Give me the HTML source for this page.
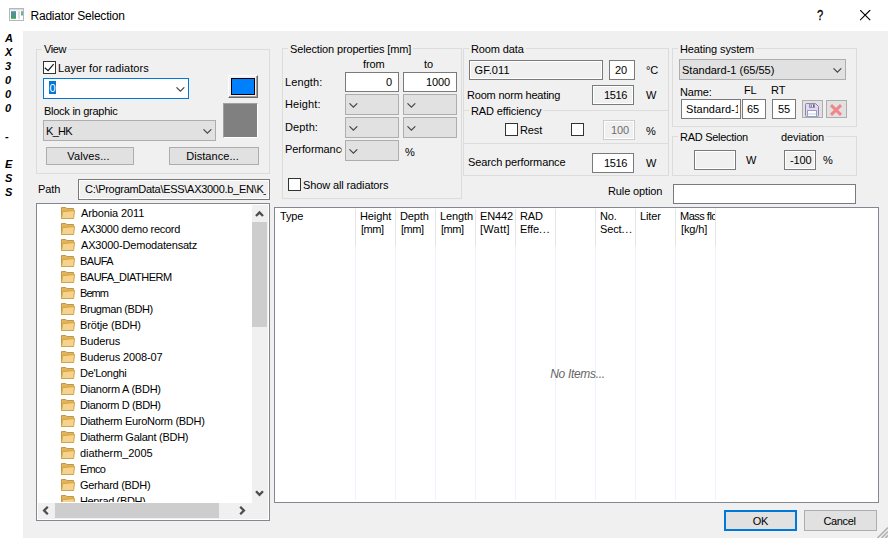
<!DOCTYPE html>
<html>
<head>
<meta charset="utf-8">
<title>Radiator Selection</title>
<style>
*{box-sizing:border-box;margin:0;padding:0}
html,body{width:889px;height:539px;overflow:hidden;background:#fff}
body{position:relative;font-family:"Liberation Sans",sans-serif;font-size:11px;color:#000;letter-spacing:-0.12px;line-height:13px}
.a{position:absolute;white-space:nowrap}
.panel{left:23px;top:31px;width:865px;height:507px;background:#f0f0f0}
.gb{border:1px solid #dcdcdc}
.gl{background:#f0f0f0;padding:0 2px;height:13px}
.in{border:1px solid #7a7a7a;background:#fff;overflow:hidden;padding:3px 3px 0 3px}
.ro{background:#f0f0f0;box-shadow:inset 0 0 0 1px #fff}
.dis{border-color:#cccccc;color:#6d6d6d;background:#f0f0f0;box-shadow:inset 0 0 0 1px #fff}
.r{text-align:right}
.cb{border:1px solid #adadad;background:#e1e1e1;overflow:hidden;padding:3px 3px 0 3px}
.btn{border:1px solid #adadad;background:#e1e1e1;text-align:center;padding-top:3px}
.chk{width:13px;height:13px;border:1px solid #333;background:#fff}
.chev{width:9px;height:5px}
.side{left:0;top:31px;width:23px;font-weight:bold;font-style:italic;font-size:11px;line-height:14px;letter-spacing:0}
.side div{height:14px;padding-left:5px}
.title{left:30.5px;top:8px;font-size:12px;line-height:16px;letter-spacing:-0.22px}
.tree{left:36px;top:203px;width:234px;height:318px;border:1px solid #828790;background:#fff;overflow:hidden}
.ti{position:absolute;left:0;height:16px;width:215px}
.ti svg{position:absolute;left:24px;top:2px}
.ti span{position:absolute;left:44px;top:2px;line-height:13px}
.list{left:274px;top:207px;width:605px;height:296px;border:1px solid #828790;background:#fff;overflow:hidden}
.hc{position:absolute;top:0;height:292px;border-right:1px solid #ebf2fb;overflow:hidden;padding:2px 0 0 4px;line-height:13.4px}
</style>
</head>
<body>
<!-- title bar -->
<svg class="a" style="left:9px;top:8px" width="15" height="13" viewBox="0 0 15 13">
  <defs><linearGradient id="ig" x1="0" y1="0" x2="0" y2="1"><stop offset="0" stop-color="#5d88b4"/><stop offset="1" stop-color="#3ea458"/></linearGradient></defs>
  <rect x="0.5" y="0.5" width="14" height="12" fill="#fdfdfd" stroke="#b4b8bc"/>
  <rect x="1" y="1" width="13" height="1.3" fill="#d9dcdf"/>
  <rect x="2" y="3.2" width="5" height="7.6" fill="url(#ig)"/>
  <rect x="9" y="3.2" width="2" height="7.6" fill="#dedede"/>
  <rect x="12" y="3.2" width="2" height="4.3" fill="url(#ig)" opacity="0.8"/>
</svg>
<div class="a title">Radiator Selection</div>
<div class="a" style="left:817px;top:7px;font-size:14px;line-height:16px;letter-spacing:0;-webkit-text-stroke:0.3px #000;transform:scaleX(0.8);transform-origin:0 0">?</div>
<svg class="a" style="left:860px;top:10px" width="11" height="11" viewBox="0 0 11 11"><path d="M0 0 L10.2 10.2 M10.2 0 L0 10.2" stroke="#000" stroke-width="1.15" fill="none"/></svg>

<!-- side strip -->
<div class="a side"><div>A</div><div>X</div><div>3</div><div>0</div><div>0</div><div>0</div><div>&nbsp;</div><div>-</div><div>&nbsp;</div><div>E</div><div>S</div><div>S</div></div>

<div class="a panel"></div>

<!-- View group -->
<div class="a gb" style="left:36px;top:49px;width:234px;height:125px"></div>
<div class="a gl" style="left:42px;top:43px;letter-spacing:-0.4px">View</div>
<div class="a chk" style="left:43px;top:61px"></div>
<svg class="a" style="left:44px;top:62px" width="11" height="11" viewBox="0 0 11 11"><path d="M0.8 5.8 L4.1 8.6 L9.6 2.2" stroke="#111" stroke-width="1.15" fill="none"/></svg>
<div class="a" style="left:58px;top:62px;letter-spacing:0.08px">Layer for radiators</div>
<div class="a in" style="left:43px;top:78px;width:146px;height:21px;border-color:#0078d7"><span style="background:#0078d7;color:#fff;display:inline-block;height:13px;width:7px;margin-left:2px;position:relative;top:-1px;line-height:14px;text-align:center">0</span></div>
<svg class="a chev" style="left:176px;top:87px" viewBox="0 0 9 5"><path d="M0.5 0.3 L4.4 4.2 L8.3 0.3" stroke="#444" stroke-width="1.1" fill="none"/></svg>
<!-- colour button -->
<div class="a" style="left:228px;top:75px;width:30px;height:23px;background:#f0f0f0;border-top:1px solid #fff;border-left:1px solid #fff;border-right:1px solid #696969;border-bottom:1px solid #696969"></div>
<div class="a" style="left:229px;top:76px;width:28px;height:21px;border-right:1px solid #a0a0a0;border-bottom:1px solid #a0a0a0"></div>
<div class="a" style="left:231px;top:78px;width:24px;height:17px;background:#0080ff;border:1px solid #000"></div>
<!-- grey block -->
<div class="a" style="left:223px;top:103px;width:35px;height:35px;background:#808080;border-top:1px solid #a0a0a0;border-left:1px solid #a0a0a0;border-right:1px solid #fff;border-bottom:1px solid #fff"></div>
<div class="a" style="left:44px;top:105px;letter-spacing:-0.26px">Block in graphic</div>
<div class="a cb" style="left:43px;top:120px;width:173px;height:21px;padding-top:4px;padding-left:2px;letter-spacing:-0.7px">K_HK</div>
<svg class="a chev" style="left:203px;top:129px" viewBox="0 0 9 5"><path d="M0.5 0.3 L4.4 4.2 L8.3 0.3" stroke="#444" stroke-width="1.1" fill="none"/></svg>
<div class="a btn" style="left:46px;top:147px;width:88px;height:18px;padding-top:2px;letter-spacing:0.1px;padding-right:3px">Valves...</div>
<div class="a btn" style="left:169px;top:147px;width:90px;height:18px;padding-top:2px;letter-spacing:0.07px;padding-right:3px">Distance...</div>

<!-- Path -->
<div class="a" style="left:38px;top:183px">Path</div>
<div class="a in ro" style="left:78px;top:179px;width:192px;height:21px;padding-left:6px"><div style="width:181px;overflow:hidden;letter-spacing:-0.29px">C:\ProgramData\ESS\AX3000.b_EN\K_</div></div>

<!-- Selection properties -->
<div class="a gb" style="left:282px;top:48px;width:180px;height:151px"></div>
<div class="a gl" style="left:288px;top:43px;letter-spacing:-0.14px">Selection properties [mm]</div>
<div class="a" style="left:363px;top:58px">from</div>
<div class="a" style="left:424px;top:58px">to</div>
<div class="a" style="left:285px;top:76px;letter-spacing:0.1px">Length:</div>
<div class="a in r" style="left:345px;top:72px;width:54px;height:20px;padding-right:6px">0</div>
<div class="a in r" style="left:403px;top:72px;width:54px;height:20px;padding-right:6px">1000</div>
<div class="a" style="left:285px;top:98px;letter-spacing:0.1px">Height:</div>
<div class="a cb" style="left:345px;top:94px;width:54px;height:21px"></div>
<div class="a cb" style="left:403px;top:94px;width:54px;height:21px"></div>
<svg class="a chev" style="left:349px;top:103px" viewBox="0 0 9 5"><path d="M0.5 0.3 L4.4 4.2 L8.3 0.3" stroke="#444" stroke-width="1.1" fill="none"/></svg>
<svg class="a chev" style="left:407px;top:103px" viewBox="0 0 9 5"><path d="M0.5 0.3 L4.4 4.2 L8.3 0.3" stroke="#444" stroke-width="1.1" fill="none"/></svg>
<div class="a" style="left:285px;top:121px;letter-spacing:0.1px">Depth:</div>
<div class="a cb" style="left:345px;top:117px;width:54px;height:21px"></div>
<div class="a cb" style="left:403px;top:117px;width:54px;height:21px"></div>
<svg class="a chev" style="left:349px;top:126px" viewBox="0 0 9 5"><path d="M0.5 0.3 L4.4 4.2 L8.3 0.3" stroke="#444" stroke-width="1.1" fill="none"/></svg>
<svg class="a chev" style="left:407px;top:126px" viewBox="0 0 9 5"><path d="M0.5 0.3 L4.4 4.2 L8.3 0.3" stroke="#444" stroke-width="1.1" fill="none"/></svg>
<div class="a" style="left:285px;top:143px;width:57px;overflow:hidden;letter-spacing:-0.08px">Performance:</div>
<div class="a cb" style="left:345px;top:140px;width:54px;height:21px"></div>
<svg class="a chev" style="left:349px;top:149px" viewBox="0 0 9 5"><path d="M0.5 0.3 L4.4 4.2 L8.3 0.3" stroke="#444" stroke-width="1.1" fill="none"/></svg>
<div class="a" style="left:405px;top:146px">%</div>
<div class="a chk" style="left:288px;top:178px"></div>
<div class="a" style="left:303px;top:179px">Show all radiators</div>

<!-- Room data -->
<div class="a gb" style="left:463px;top:48px;width:206px;height:128px"></div>
<div class="a gb" style="left:463px;top:110px;width:206px;height:34px"></div>
<div class="a gl" style="left:469px;top:43px">Room data</div>
<div class="a in ro" style="left:469px;top:60px;width:134px;height:20px;padding-left:4.5px;letter-spacing:0.08px">GF.011</div>
<div class="a in r" style="left:609px;top:60px;width:26px;height:20px;padding-right:7px">20</div>
<div class="a" style="left:646px;top:64px">°C</div>
<div class="a" style="left:467px;top:89px;letter-spacing:-0.2px">Room norm heating</div>
<div class="a in ro r" style="left:592px;top:85px;width:42px;height:20px;padding-right:6px;letter-spacing:-0.35px">1516</div>
<div class="a" style="left:646px;top:89px">W</div>
<div class="a gl" style="left:469px;top:105px">RAD efficiency</div>
<div class="a chk" style="left:505px;top:123px"></div>
<div class="a" style="left:520px;top:124px">Rest</div>
<div class="a chk" style="left:571px;top:123px"></div>
<div class="a in dis r" style="left:603px;top:120px;width:32px;height:20px;padding-right:5px">100</div>
<div class="a" style="left:646px;top:125px">%</div>
<div class="a" style="left:468px;top:156px">Search performance</div>
<div class="a in r" style="left:592px;top:153px;width:42px;height:20px;padding-right:6px;letter-spacing:-0.35px">1516</div>
<div class="a" style="left:646px;top:157px">W</div>
<div class="a" style="left:608px;top:185px">Rule option</div>

<!-- Heating system -->
<div class="a gb" style="left:672px;top:48px;width:185px;height:79px"></div>
<div class="a gl" style="left:678px;top:43px">Heating system</div>
<div class="a cb" style="left:679px;top:59px;width:167px;height:21px;padding-left:2px;padding-top:4px;letter-spacing:0">Standard-1 (65/55)</div>
<svg class="a chev" style="left:833px;top:68px" viewBox="0 0 9 5"><path d="M0.5 0.3 L4.4 4.2 L8.3 0.3" stroke="#444" stroke-width="1.1" fill="none"/></svg>
<div class="a" style="left:680px;top:86px">Name:</div>
<div class="a" style="left:744px;top:84px">FL</div>
<div class="a" style="left:771px;top:84px">RT</div>
<div class="a in" style="left:681px;top:99px;width:60px;height:20px;padding-left:4px"><div style="width:52px;overflow:hidden;letter-spacing:0.05px">Standard-1</div></div>
<div class="a in" style="left:742px;top:99px;width:24px;height:20px;padding-left:4px">65</div>
<div class="a in" style="left:772px;top:99px;width:24px;height:20px;padding-left:5px">55</div>
<div class="a" style="left:802px;top:100px;width:21px;height:18px;border:1px solid #adadad;background:#e1e1e1"></div>
<svg class="a" style="left:805px;top:103px" width="14" height="14" viewBox="0 0 14 14"><path d="M1.5 0.5 H10.5 L13.5 3.5 V12.5 Q13.5 13.5 12.5 13.5 H1.5 Q0.5 13.5 0.5 12.5 V1.5 Q0.5 0.5 1.5 0.5 Z" fill="#e2d6fa" stroke="#8f86a6"/><rect x="4" y="1" width="6" height="4" fill="#f4f4f8"/><rect x="4.5" y="1" width="5" height="3.5" fill="none" stroke="#9a93a8" stroke-width="1"/><rect x="5.5" y="1.5" width="1.5" height="2.5" fill="#8a8a98"/><rect x="8" y="1.5" width="1" height="2.5" fill="#5d5d6b"/><rect x="2.5" y="7.5" width="9" height="6" fill="#fff" stroke="#9aa0b5"/><rect x="3" y="10" width="8" height="2" fill="#dbeafa"/></svg>
<div class="a" style="left:826px;top:100px;width:21px;height:18px;border:1px solid #adadad;background:#e1e1e1"></div>
<svg class="a" style="left:829px;top:103px" width="14" height="14" viewBox="0 0 14 14"><path d="M2 2.2 L12 11.8 M12 2.2 L2 11.8" stroke="#f0868a" stroke-width="3" fill="none"/></svg>

<!-- RAD Selection -->
<div class="a gb" style="left:672px;top:136px;width:185px;height:40px"></div>
<div class="a gl" style="left:678px;top:131px;width:110px;letter-spacing:-0.28px">RAD Selection</div>
<div class="a gl" style="left:779px;top:131px">deviation</div>
<div class="a in ro" style="left:694px;top:150px;width:42px;height:20px"></div>
<div class="a" style="left:746px;top:154px">W</div>
<div class="a in ro" style="left:784px;top:150px;width:32px;height:20px;padding-left:5px"><div style="width:22.4px;overflow:hidden">-100.</div></div>
<div class="a" style="left:823px;top:154px">%</div>
<div class="a in" style="left:673px;top:184px;width:183px;height:20px"></div>

<!-- tree -->
<div class="a tree" id="tree">
<div class="ti" style="top:1px"><svg width="14" height="12" viewBox="0 0 14 12"><path d="M0.5 11.5 V0.5 H4.8 L5.8 1.5 H12.5 V4.5" fill="#e2b25c" stroke="#c7973f"/><path d="M0.5 11.5 L1.6 4.6 L13.5 3.6 L12.6 11.5 Z" fill="#f6d38c" stroke="#d2a24a"/></svg><span style="left:44px;letter-spacing:-0.12px">Arbonia 2011</span></div>
<div class="ti" style="top:17px"><svg width="14" height="12" viewBox="0 0 14 12"><path d="M0.5 11.5 V0.5 H4.8 L5.8 1.5 H12.5 V4.5" fill="#e2b25c" stroke="#c7973f"/><path d="M0.5 11.5 L1.6 4.6 L13.5 3.6 L12.6 11.5 Z" fill="#f6d38c" stroke="#d2a24a"/></svg><span style="left:44px;letter-spacing:-0.27px">AX3000 demo record</span></div>
<div class="ti" style="top:33px"><svg width="14" height="12" viewBox="0 0 14 12"><path d="M0.5 11.5 V0.5 H4.8 L5.8 1.5 H12.5 V4.5" fill="#e2b25c" stroke="#c7973f"/><path d="M0.5 11.5 L1.6 4.6 L13.5 3.6 L12.6 11.5 Z" fill="#f6d38c" stroke="#d2a24a"/></svg><span style="left:44px;letter-spacing:-0.19px">AX3000-Demodatensatz</span></div>
<div class="ti" style="top:49px"><svg width="14" height="12" viewBox="0 0 14 12"><path d="M0.5 11.5 V0.5 H4.8 L5.8 1.5 H12.5 V4.5" fill="#e2b25c" stroke="#c7973f"/><path d="M0.5 11.5 L1.6 4.6 L13.5 3.6 L12.6 11.5 Z" fill="#f6d38c" stroke="#d2a24a"/></svg><span style="left:43px;letter-spacing:-0.64px">BAUFA</span></div>
<div class="ti" style="top:65px"><svg width="14" height="12" viewBox="0 0 14 12"><path d="M0.5 11.5 V0.5 H4.8 L5.8 1.5 H12.5 V4.5" fill="#e2b25c" stroke="#c7973f"/><path d="M0.5 11.5 L1.6 4.6 L13.5 3.6 L12.6 11.5 Z" fill="#f6d38c" stroke="#d2a24a"/></svg><span style="left:43px;letter-spacing:-0.52px">BAUFA_DIATHERM</span></div>
<div class="ti" style="top:81px"><svg width="14" height="12" viewBox="0 0 14 12"><path d="M0.5 11.5 V0.5 H4.8 L5.8 1.5 H12.5 V4.5" fill="#e2b25c" stroke="#c7973f"/><path d="M0.5 11.5 L1.6 4.6 L13.5 3.6 L12.6 11.5 Z" fill="#f6d38c" stroke="#d2a24a"/></svg><span style="left:43px;letter-spacing:-0.93px">Bemm</span></div>
<div class="ti" style="top:97px"><svg width="14" height="12" viewBox="0 0 14 12"><path d="M0.5 11.5 V0.5 H4.8 L5.8 1.5 H12.5 V4.5" fill="#e2b25c" stroke="#c7973f"/><path d="M0.5 11.5 L1.6 4.6 L13.5 3.6 L12.6 11.5 Z" fill="#f6d38c" stroke="#d2a24a"/></svg><span style="left:43px;letter-spacing:-0.42px">Brugman (BDH)</span></div>
<div class="ti" style="top:113px"><svg width="14" height="12" viewBox="0 0 14 12"><path d="M0.5 11.5 V0.5 H4.8 L5.8 1.5 H12.5 V4.5" fill="#e2b25c" stroke="#c7973f"/><path d="M0.5 11.5 L1.6 4.6 L13.5 3.6 L12.6 11.5 Z" fill="#f6d38c" stroke="#d2a24a"/></svg><span style="left:43px;letter-spacing:-0.12px">Brötje (BDH)</span></div>
<div class="ti" style="top:129px"><svg width="14" height="12" viewBox="0 0 14 12"><path d="M0.5 11.5 V0.5 H4.8 L5.8 1.5 H12.5 V4.5" fill="#e2b25c" stroke="#c7973f"/><path d="M0.5 11.5 L1.6 4.6 L13.5 3.6 L12.6 11.5 Z" fill="#f6d38c" stroke="#d2a24a"/></svg><span style="left:43px;letter-spacing:-0.12px">Buderus</span></div>
<div class="ti" style="top:145px"><svg width="14" height="12" viewBox="0 0 14 12"><path d="M0.5 11.5 V0.5 H4.8 L5.8 1.5 H12.5 V4.5" fill="#e2b25c" stroke="#c7973f"/><path d="M0.5 11.5 L1.6 4.6 L13.5 3.6 L12.6 11.5 Z" fill="#f6d38c" stroke="#d2a24a"/></svg><span style="left:43px;letter-spacing:-0.12px">Buderus 2008-07</span></div>
<div class="ti" style="top:161px"><svg width="14" height="12" viewBox="0 0 14 12"><path d="M0.5 11.5 V0.5 H4.8 L5.8 1.5 H12.5 V4.5" fill="#e2b25c" stroke="#c7973f"/><path d="M0.5 11.5 L1.6 4.6 L13.5 3.6 L12.6 11.5 Z" fill="#f6d38c" stroke="#d2a24a"/></svg><span style="left:43px;letter-spacing:-0.31px">De'Longhi</span></div>
<div class="ti" style="top:177px"><svg width="14" height="12" viewBox="0 0 14 12"><path d="M0.5 11.5 V0.5 H4.8 L5.8 1.5 H12.5 V4.5" fill="#e2b25c" stroke="#c7973f"/><path d="M0.5 11.5 L1.6 4.6 L13.5 3.6 L12.6 11.5 Z" fill="#f6d38c" stroke="#d2a24a"/></svg><span style="left:43px;letter-spacing:-0.24px">Dianorm A (BDH)</span></div>
<div class="ti" style="top:193px"><svg width="14" height="12" viewBox="0 0 14 12"><path d="M0.5 11.5 V0.5 H4.8 L5.8 1.5 H12.5 V4.5" fill="#e2b25c" stroke="#c7973f"/><path d="M0.5 11.5 L1.6 4.6 L13.5 3.6 L12.6 11.5 Z" fill="#f6d38c" stroke="#d2a24a"/></svg><span style="left:43px;letter-spacing:-0.37px">Dianorm D (BDH)</span></div>
<div class="ti" style="top:209px"><svg width="14" height="12" viewBox="0 0 14 12"><path d="M0.5 11.5 V0.5 H4.8 L5.8 1.5 H12.5 V4.5" fill="#e2b25c" stroke="#c7973f"/><path d="M0.5 11.5 L1.6 4.6 L13.5 3.6 L12.6 11.5 Z" fill="#f6d38c" stroke="#d2a24a"/></svg><span style="left:43px;letter-spacing:-0.30px">Diatherm EuroNorm (BDH)</span></div>
<div class="ti" style="top:225px"><svg width="14" height="12" viewBox="0 0 14 12"><path d="M0.5 11.5 V0.5 H4.8 L5.8 1.5 H12.5 V4.5" fill="#e2b25c" stroke="#c7973f"/><path d="M0.5 11.5 L1.6 4.6 L13.5 3.6 L12.6 11.5 Z" fill="#f6d38c" stroke="#d2a24a"/></svg><span style="left:43px;letter-spacing:-0.26px">Diatherm Galant (BDH)</span></div>
<div class="ti" style="top:241px"><svg width="14" height="12" viewBox="0 0 14 12"><path d="M0.5 11.5 V0.5 H4.8 L5.8 1.5 H12.5 V4.5" fill="#e2b25c" stroke="#c7973f"/><path d="M0.5 11.5 L1.6 4.6 L13.5 3.6 L12.6 11.5 Z" fill="#f6d38c" stroke="#d2a24a"/></svg><span style="left:43px;letter-spacing:-0.07px">diatherm_2005</span></div>
<div class="ti" style="top:257px"><svg width="14" height="12" viewBox="0 0 14 12"><path d="M0.5 11.5 V0.5 H4.8 L5.8 1.5 H12.5 V4.5" fill="#e2b25c" stroke="#c7973f"/><path d="M0.5 11.5 L1.6 4.6 L13.5 3.6 L12.6 11.5 Z" fill="#f6d38c" stroke="#d2a24a"/></svg><span style="left:43px;letter-spacing:-0.75px">Emco</span></div>
<div class="ti" style="top:273px"><svg width="14" height="12" viewBox="0 0 14 12"><path d="M0.5 11.5 V0.5 H4.8 L5.8 1.5 H12.5 V4.5" fill="#e2b25c" stroke="#c7973f"/><path d="M0.5 11.5 L1.6 4.6 L13.5 3.6 L12.6 11.5 Z" fill="#f6d38c" stroke="#d2a24a"/></svg><span style="left:43px;letter-spacing:-0.28px">Gerhard (BDH)</span></div>
<div class="ti" style="top:289px"><svg width="14" height="12" viewBox="0 0 14 12"><path d="M0.5 11.5 V0.5 H4.8 L5.8 1.5 H12.5 V4.5" fill="#e2b25c" stroke="#c7973f"/><path d="M0.5 11.5 L1.6 4.6 L13.5 3.6 L12.6 11.5 Z" fill="#f6d38c" stroke="#d2a24a"/></svg><span style="left:43px;letter-spacing:-0.36px">Henrad (BDH)</span></div>
<div style="position:absolute;left:215px;top:1px;width:16px;height:314px;background:#f0f0f0"></div>
<div style="position:absolute;left:215px;top:18px;width:15px;height:105px;background:#cdcdcd"></div>
<svg style="position:absolute;left:218px;top:6px" width="9" height="7" viewBox="0 0 9 7"><path d="M1 6 L4.5 2.4 L8 6" stroke="#4d4d4d" stroke-width="2.3" fill="none"/></svg>
<svg style="position:absolute;left:218px;top:286px" width="9" height="7" viewBox="0 0 9 7"><path d="M1 1.2 L4.5 4.8 L8 1.2" stroke="#4d4d4d" stroke-width="2.3" fill="none"/></svg>
<div style="position:absolute;left:0;top:298px;width:215px;height:1px;background:#fff"></div>
<div style="position:absolute;left:1px;top:299px;width:230px;height:16px;background:#f0f0f0"></div>
<div style="position:absolute;left:18px;top:299px;width:164px;height:15px;background:#cdcdcd"></div>
<svg style="position:absolute;left:5px;top:302px" width="7" height="9" viewBox="0 0 7 9"><path d="M5.8 0.8 L2.1 4.5 L5.8 8.2" stroke="#4d4d4d" stroke-width="2.3" fill="none"/></svg>
<svg style="position:absolute;left:202px;top:302px" width="7" height="9" viewBox="0 0 7 9"><path d="M1.2 0.8 L4.9 4.5 L1.2 8.2" stroke="#4d4d4d" stroke-width="2.3" fill="none"/></svg>
</div>

<!-- list -->
<div class="a list" id="list">
<div class="hc" style="left:0px;width:81px;padding-left:5px">Type</div>
<div style="position:absolute;left:80px;top:2px;width:1px;height:35px;background:#e4e4e4"></div>
<div class="hc" style="left:81px;width:40px">Height<br><span style="margin-left:1px"></span><span style="letter-spacing:-0.5px">[mm]</span></div>
<div style="position:absolute;left:120px;top:2px;width:1px;height:35px;background:#e4e4e4"></div>
<div class="hc" style="left:121px;width:40px">Depth<br><span style="margin-left:1px"></span><span style="letter-spacing:-0.5px">[mm]</span></div>
<div style="position:absolute;left:160px;top:2px;width:1px;height:35px;background:#e4e4e4"></div>
<div class="hc" style="left:161px;width:40px">Length<br><span style="margin-left:1px"></span><span style="letter-spacing:-0.5px">[mm]</span></div>
<div style="position:absolute;left:200px;top:2px;width:1px;height:35px;background:#e4e4e4"></div>
<div class="hc" style="left:201px;width:40px">EN442<br><span style="letter-spacing:0.25px">[Watt]</span></div>
<div style="position:absolute;left:240px;top:2px;width:1px;height:35px;background:#e4e4e4"></div>
<div class="hc" style="left:241px;width:40px">RAD<br>Effe<span style="letter-spacing:0.7px">...</span></div>
<div style="position:absolute;left:280px;top:2px;width:1px;height:35px;background:#e4e4e4"></div>
<div class="hc" style="left:281px;width:40px"></div>
<div style="position:absolute;left:320px;top:2px;width:1px;height:35px;background:#e4e4e4"></div>
<div class="hc" style="left:321px;width:40px">No.<br>Sect<span style="letter-spacing:0.7px">...</span></div>
<div style="position:absolute;left:360px;top:2px;width:1px;height:35px;background:#e4e4e4"></div>
<div class="hc" style="left:361px;width:40px">Liter</div>
<div style="position:absolute;left:400px;top:2px;width:1px;height:35px;background:#e4e4e4"></div>
<div class="hc" style="left:401px;width:40px"><span style="letter-spacing:-0.5px">Mass flow</span><br><span style="margin-left:1px"></span>[kg/h]</div>
<div style="position:absolute;left:440px;top:2px;width:1px;height:35px;background:#e4e4e4"></div>
<div style="position:absolute;left:0;top:159px;width:603px;text-align:center;font-style:italic;color:#666;font-size:12px;line-height:14px;letter-spacing:-0.3px;padding-left:2px">No Items...</div>
</div>

<!-- buttons -->
<div class="a btn" style="left:724px;top:510px;width:73px;height:21px;border:2px solid #0078d7;padding-top:3px">OK</div>
<div class="a btn" style="left:804px;top:510px;width:73px;height:21px;padding-top:4px;letter-spacing:-0.4px;padding-right:2px">Cancel</div>
<svg class="a" style="left:876px;top:526px" width="12" height="12" viewBox="0 0 12 12"><path d="M1.5 12 L12 1.5 M5.6 12 L12 5.6 M9.3 12 L12 9.3" stroke="#b2b2b2" stroke-width="1.6" fill="none"/></svg>
</body>
</html>
